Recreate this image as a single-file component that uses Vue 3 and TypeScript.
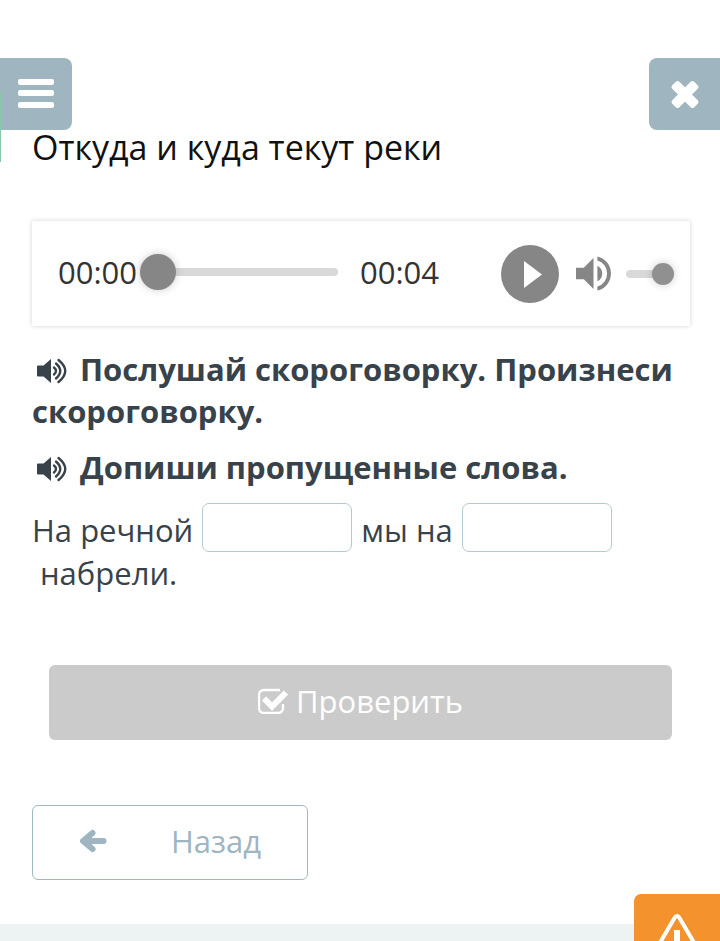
<script setup lang="ts">
import { computed, ref } from 'vue'

const duration = 4
const position = ref(0)
const volume = ref(100)
const playing = ref(false)
const firstWord = ref('')
const secondWord = ref('')

const tasks = ['Послушай скороговорку. Произнеси скороговорку.', 'Допиши пропущенные слова.']

const clock = (seconds: number): string =>
  `${String(Math.floor(seconds / 60)).padStart(2, '0')}:${String(Math.floor(seconds % 60)).padStart(2, '0')}`

const elapsed = computed(() => clock(position.value))
const total = clock(duration)
const incomplete = computed(() => !firstWord.value || !secondWord.value)
</script>

<template>
  <div class="page">
    <header class="topbar">
      <button class="tab tab-menu" type="button" aria-label="Меню">
        <svg class="tab-icon" viewBox="0 0 36 36" fill="currentColor" aria-hidden="true">
          <rect x="0" y="3" width="36" height="6" rx="2" />
          <rect x="0" y="14" width="36" height="6" rx="2" />
          <rect x="0" y="26" width="36" height="6" rx="2" />
        </svg>
      </button>
      <button class="tab tab-close" type="button" aria-label="Закрыть">
        <svg class="tab-icon" viewBox="0 0 36 36" fill="currentColor" aria-hidden="true">
          <rect x="2.500" y="13.500" width="31" height="10" rx="2.500" transform="rotate(45 18 18.500)" />
          <rect x="2.500" y="13.500" width="31" height="10" rx="2.500" transform="rotate(-45 18 18.500)" />
        </svg>
      </button>
    </header>
    <span class="edge"></span>

    <main class="content">
      <h1 class="title">Откуда и куда текут реки</h1>

      <section class="player">
        <span class="time">{{ elapsed }}</span>
        <input v-model.number="position" class="seek" type="range" min="0" :max="duration" aria-label="Позиция" />
        <span class="time">{{ total }}</span>
        <button class="play" type="button" aria-label="Воспроизвести" @click="playing = !playing">
          <svg viewBox="0 0 58 58" fill="currentColor" aria-hidden="true"><path d="M23 16v27l18-13.500z" /></svg>
        </button>
        <button class="mute" type="button" aria-label="Звук">
          <svg viewBox="3 3 18 18" fill="currentColor" aria-hidden="true">
            <path d="M3 9v6h4l5 5V4L7 9H3zm13.500 3A4.500 4.500 0 0 0 14 7.970v8.050A4.470 4.470 0 0 0 16.500 12zM14 3.230v2.060a7 7 0 0 1 0 13.420v2.060a9 9 0 0 0 0-17.540z" />
          </svg>
        </button>
        <input v-model.number="volume" class="volume" type="range" min="0" max="100" aria-label="Громкость" />
      </section>

      <p v-for="task in tasks" :key="task" class="task">
        <button class="speak" type="button" aria-label="Прослушать">
          <svg viewBox="0 0 30 26" aria-hidden="true">
            <path d="M1 7.500h5.500L14 1v24l-7.500-6.500H1q-1 0-1-1v-9q0-1 1-1z" fill="currentColor" />
            <path d="M17 9.500q4 3.500 0 7M19 5.500q8.500 7.500 0 15M21.500 2q13.500 11 0 22" fill="none" stroke="currentColor" stroke-width="2.400" stroke-linecap="round" />
          </svg>
        </button>{{ task }}
      </p>

      <p class="sentence">
        <span>На речной</span><input v-model="firstWord" class="gap" type="text" aria-label="Первое слово" /><span>мы на</span><input v-model="secondWord" class="gap" type="text" aria-label="Второе слово" /> <span class="tail">набрели.</span>
      </p>

      <button class="check" type="button" :disabled="incomplete">
        <svg class="check-icon" viewBox="0 0 30 26" fill="none" stroke="currentColor" aria-hidden="true">
          <path d="M22 2H6a5 5 0 0 0-5 5v13a5 5 0 0 0 5 5h14a5 5 0 0 0 5-5v-4" stroke-width="2.400" />
          <path d="m6 10.500 8 8L28 4.500" stroke-width="6" />
        </svg>
        Проверить
      </button>

      <button class="back" type="button">
        <svg class="back-icon" viewBox="0 0 28 24" fill="none" stroke="currentColor" stroke-linecap="round" stroke-linejoin="round" aria-hidden="true">
          <path d="M13.500 4 4 12l9.500 8" stroke-width="6" />
          <path d="M6 12h18.500" stroke-width="6" />
          <path d="M2 12 13 4v16z" fill="currentColor" stroke="none" />
        </svg>
        Назад
      </button>
    </main>

    <button class="report" type="button" aria-label="Сообщить об ошибке">
      <svg viewBox="0 0 44 40" fill="none" stroke="currentColor" aria-hidden="true">
        <path d="M22 4q1.500 0 2.500 2L41 34q1 3-2 3H5q-3 0-2-3L19.500 6q1-2 2.500-2z" stroke-width="4" />
        <path d="M22 18v11M22 31v4" stroke-width="6" />
      </svg>
    </button>
  </div>
</template>

<style>
body {
  margin: 0;
  background: #edf2f3;
}
</style>

<style scoped>
.page {
  position: relative;
  background: #fff;
  color: #37424a;
  font-family: 'Open Sans', 'Noto Sans', sans-serif;
  font-size: 31px;
  line-height: 42px;
  padding-top: 58px;
  padding-bottom: 44px;
  box-shadow: 0 2px 8px rgba(60, 80, 80, 0.2);
}

button,
input {
  box-sizing: border-box;
  margin: 0;
  padding: 0;
  border: 0;
  font: inherit;
}

svg {
  display: block;
}

.topbar {
  display: flex;
  justify-content: space-between;
}

.tab {
  display: flex;
  align-items: center;
  justify-content: center;
  width: 72px;
  height: 72px;
  background: #9fb5bf;
  color: #fff;
}

.tab-menu {
  border-radius: 0 8px 8px 0;
}

.tab-close {
  width: 71px;
  border-radius: 8px 0 0 8px;
}

.tab-icon {
  width: 36px;
  height: 36px;
}

.edge {
  position: absolute;
  left: 0;
  top: 92px;
  width: 1px;
  height: 70px;
  background: #86c8a8;
}

.content {
  padding: 0 30px 0 32px;
}

.title {
  margin: 0 0 57px;
  color: #111;
  font-size: 34px;
  font-weight: 400;
  line-height: 34px;
}

.player {
  display: flex;
  align-items: center;
  height: 105px;
  padding: 0 16px 0 26px;
  border-radius: 2px;
  box-shadow: 0 0 5px rgba(0, 0, 0, 0.18);
  color: #333;
}

.time {
  padding-bottom: 3px;
}

.seek,
.volume {
  appearance: none;
  background: transparent;
}

.seek {
  flex: 1;
  min-width: 0;
  height: 36px;
  margin: 0 22px 3px 3px;
}

.volume {
  width: 48px;
  height: 22px;
}

.seek::-webkit-slider-runnable-track,
.volume::-webkit-slider-runnable-track {
  height: 8px;
  border-radius: 4px;
  background: #d9d9d9;
}

.seek::-webkit-slider-thumb,
.volume::-webkit-slider-thumb {
  appearance: none;
  border-radius: 50%;
  background: #868686;
  box-shadow: 0 0 8px rgba(0, 0, 0, 0.2);
}

.seek::-webkit-slider-thumb {
  width: 36px;
  height: 36px;
  margin-top: -14px;
}

.volume::-webkit-slider-thumb {
  width: 22px;
  height: 22px;
  margin-top: -7px;
  background: #909090;
}

.play {
  width: 58px;
  height: 58px;
  margin-left: 62px;
  border-radius: 50%;
  background: #868686;
  color: #fff;
}

.mute {
  width: 35px;
  height: 35px;
  margin: 0 15px 0 17px;
  background: transparent;
  color: #868686;
}

.task {
  margin: 0 0 14px;
  font-weight: 700;
}

.player + .task {
  margin-top: 22px;
}

.speak {
  width: 30px;
  height: 26px;
  margin: 0 13px 0 5px;
  background: transparent;
  color: inherit;
  vertical-align: -3px;
}

.sentence {
  margin: 15px 0 71px;
}

.gap {
  width: 150px;
  height: 49px;
  margin: 0 9px;
  padding: 0 8px;
  border: 1px solid #b3cad1;
  border-radius: 7px;
  background: #fff;
  color: inherit;
  vertical-align: 2px;
}

.tail {
  display: inline-block;
  padding-left: 8px;
}

.check {
  display: flex;
  align-items: center;
  justify-content: center;
  gap: 8px;
  width: calc(100% - 35px);
  height: 75px;
  margin: 0 0 65px 17px;
  padding-bottom: 3px;
  border-radius: 6px;
  background: #cbcbcb;
  color: #fff;
}

.check-icon {
  width: 30px;
  height: 26px;
}

.back {
  display: flex;
  align-items: center;
  gap: 64px;
  width: 276px;
  height: 75px;
  padding-bottom: 3px;
  padding-left: 46px;
  border: 1px solid #9fb9c0;
  border-radius: 6px;
  background: #fff;
  color: #9fb5bf;
}

.back-icon {
  width: 28px;
  height: 24px;
}

.report {
  position: fixed;
  right: 0;
  bottom: 0;
  display: flex;
  justify-content: center;
  width: 86px;
  height: 47px;
  padding-top: 18px;
  overflow: hidden;
  border-radius: 7px 0 0 0;
  background: #f4932d;
  color: #fff;
}

.report svg {
  flex: none;
  width: 44px;
  height: 40px;
}
</style>
